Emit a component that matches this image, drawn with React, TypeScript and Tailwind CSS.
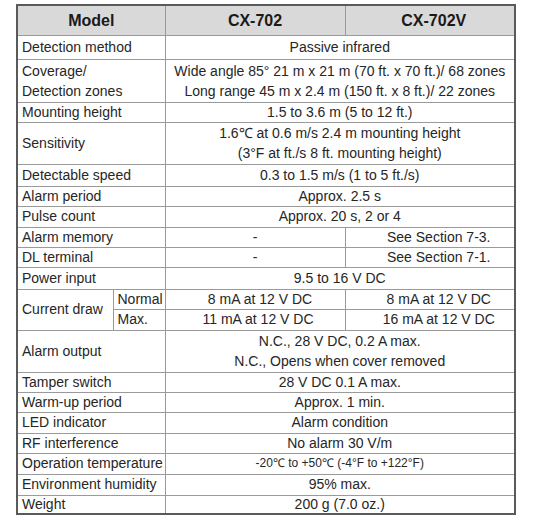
import React from "react";

const L = "border border-[#9a9a9a] py-0 pr-0 pl-[4px] text-left align-middle whitespace-nowrap";
const V = "border border-[#9a9a9a] py-0 pr-0 text-center align-middle whitespace-nowrap";
const V0 = `${V} pl-0`;

export default function App() {
  return (
    <div className="w-[534px] h-[522px] bg-white pt-[4px] pl-[16px]" style={{ fontFamily: '"Liberation Sans", Arial, sans-serif' }}>
      <table className="border-collapse border-2 border-[#5a5a5a] text-[14px] leading-[17px] text-[#262626] table-fixed w-[498px]">
        <colgroup>
          <col className="w-[96px]" />
          <col className="w-[52px]" />
          <col className="w-[180px]" />
          <col className="w-[170px]" />
        </colgroup>
        <tbody>
          <tr className="h-[30px] bg-[#d9d9d9] font-bold text-[16px] text-[#1a1a1a]">
            <td colSpan={2} className={V0}>Model</td>
            <td className={V0}>CX-702</td>
            <td className={`${V} pl-[8px]`}>CX-702V</td>
          </tr>
          <tr className="h-[24px]">
            <td colSpan={2} className={L}>Detection method</td>
            <td colSpan={2} className={V0}>Passive infrared</td>
          </tr>
          <tr className="h-[43px]">
            <td colSpan={2} className={`${L} leading-[20px]`}>Coverage/<br />Detection zones</td>
            <td colSpan={2} className={`${V0} leading-[20px]`}>Wide angle 85° 21 m x 21 m (70 ft. x 70 ft.)/ 68 zones<br />Long range 45 m x 2.4 m (150 ft. x 8 ft.)/ 22 zones</td>
          </tr>
          <tr className="h-[20px]">
            <td colSpan={2} className={L}>Mounting height</td>
            <td colSpan={2} className={V0}>1.5 to 3.6 m (5 to 12 ft.)</td>
          </tr>
          <tr className="h-[42px]">
            <td colSpan={2} className={L}>Sensitivity</td>
            <td colSpan={2} className={`${V0} leading-[20px]`}>1.6℃ at 0.6 m/s 2.4 m mounting height<br />(3°F at ft./s 8 ft. mounting height)</td>
          </tr>
          <tr className="h-[22px]">
            <td colSpan={2} className={L}>Detectable speed</td>
            <td colSpan={2} className={V0}>0.3 to 1.5 m/s (1 to 5 ft./s)</td>
          </tr>
          <tr className="h-[20px]">
            <td colSpan={2} className={L}>Alarm period</td>
            <td colSpan={2} className={V0}>Approx. 2.5 s</td>
          </tr>
          <tr className="h-[21px]">
            <td colSpan={2} className={L}>Pulse count</td>
            <td colSpan={2} className={V0}>Approx. 20 s, 2 or 4</td>
          </tr>
          <tr className="h-[20px]">
            <td colSpan={2} className={L}>Alarm memory</td>
            <td className={V0}>-</td>
            <td className={`${V} pl-[18px]`}>See Section 7-3.</td>
          </tr>
          <tr className="h-[20px]">
            <td colSpan={2} className={L}>DL terminal</td>
            <td className={V0}>-</td>
            <td className={`${V} pl-[18px]`}>See Section 7-1.</td>
          </tr>
          <tr className="h-[22px]">
            <td colSpan={2} className={L}>Power input</td>
            <td colSpan={2} className={V0}>9.5 to 16 V DC</td>
          </tr>
          <tr className="h-[20px]">
            <td rowSpan={2} className={L}>Current draw</td>
            <td className={L}>Normal</td>
            <td className={`${V} pl-[10px]`}>8 mA at 12 V DC</td>
            <td className={`${V} pl-[18px]`}>8 mA at 12 V DC</td>
          </tr>
          <tr className="h-[21px]">
            <td className={L}>Max.</td>
            <td className={`${V} pl-[6px]`}>11 mA at 12 V DC</td>
            <td className={`${V} pl-[18px]`}>16 mA at 12 V DC</td>
          </tr>
          <tr className="h-[42px]">
            <td colSpan={2} className={L}>Alarm output</td>
            <td colSpan={2} className={`${V0} leading-[20px]`}>N.C., 28 V DC, 0.2 A max.<br />N.C., Opens when cover removed</td>
          </tr>
          <tr className="h-[20px]">
            <td colSpan={2} className={L}>Tamper switch</td>
            <td colSpan={2} className={V0}>28 V DC 0.1 A max.</td>
          </tr>
          <tr className="h-[20px]">
            <td colSpan={2} className={L}>Warm-up period</td>
            <td colSpan={2} className={V0}>Approx. 1 min.</td>
          </tr>
          <tr className="h-[21px]">
            <td colSpan={2} className={L}>LED indicator</td>
            <td colSpan={2} className={V0}>Alarm condition</td>
          </tr>
          <tr className="h-[20px]">
            <td colSpan={2} className={L}>RF interference</td>
            <td colSpan={2} className={V0}>No alarm 30 V/m</td>
          </tr>
          <tr className="h-[21px]">
            <td colSpan={2} className={L}>Operation temperature</td>
            <td colSpan={2} className={`${V0} text-[12px]`}>-20℃ to +50℃ (-4°F to +122°F)</td>
          </tr>
          <tr className="h-[21px]">
            <td colSpan={2} className={L}>Environment humidity</td>
            <td colSpan={2} className={V0}>95% max.</td>
          </tr>
          <tr className="h-[19px]">
            <td colSpan={2} className={L}>Weight</td>
            <td colSpan={2} className={V0}>200 g (7.0 oz.)</td>
          </tr>
        </tbody>
      </table>
    </div>
  );
}
